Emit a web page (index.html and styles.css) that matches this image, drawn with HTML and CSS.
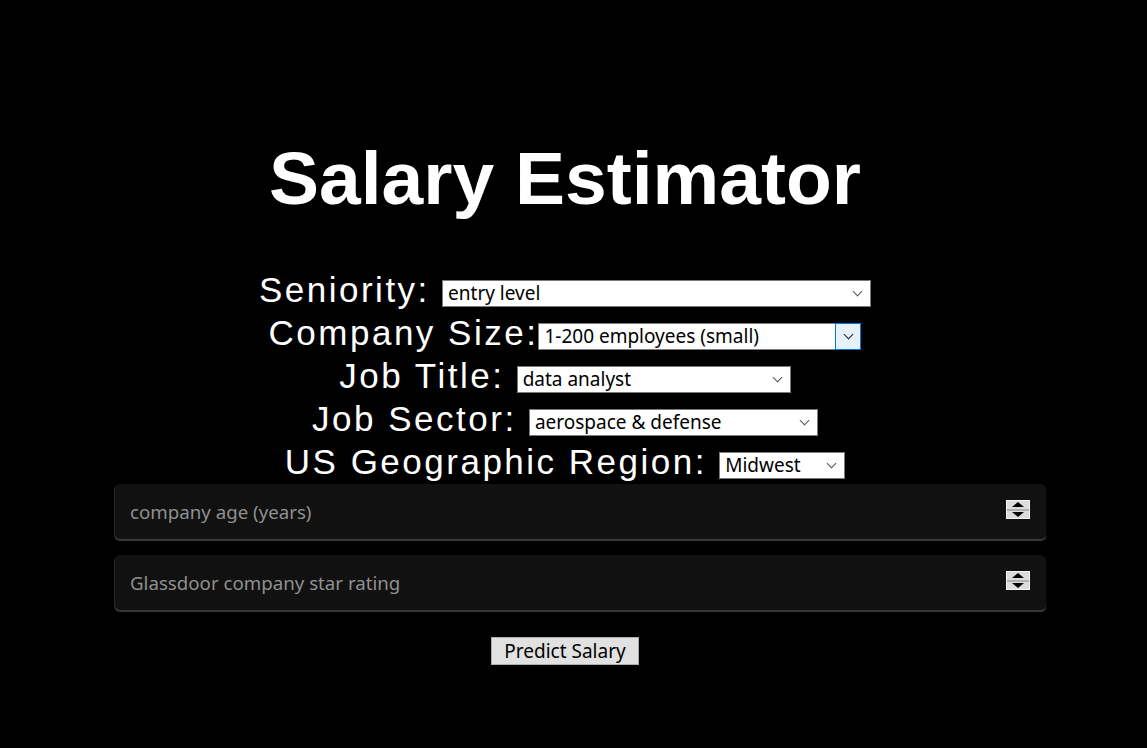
FILE: index.html
```html
<!DOCTYPE html>
<html>
<head>
<meta charset="utf-8">
<link rel="stylesheet" href="styles.css">
</head>
<body>
<div class="page">
  <h1 class="title">Salary Estimator</h1>
  <form class="form">
    <div class="row"><label class="lbl">Seniority: </label><span class="sel w429"><select class="select"><option>entry level</option></select><span class="chev"></span></span></div>
    <div class="row"><label class="lbl">Company Size:</label><span class="sel w323 focus"><select class="select"><option>1-200 employees (small)</option></select><span class="chevbox"><span class="chev"></span></span></span></div>
    <div class="row"><label class="lbl">Job Title: </label><span class="sel w274"><select class="select"><option>data analyst</option></select><span class="chev"></span></span></div>
    <div class="row"><label class="lbl">Job Sector: </label><span class="sel w289"><select class="select"><option>aerospace &amp; defense</option></select><span class="chev"></span></span></div>
    <div class="row"><label class="lbl">US Geographic Region: </label><span class="sel w126"><select class="select"><option>Midwest</option></select><span class="chev"></span></span></div>
    <div class="num">
      <input class="numin" type="text" placeholder="company age (years)">
      <span class="spin"><span class="up"></span><span class="down"></span></span>
    </div>
    <div class="num">
      <input class="numin" type="text" placeholder="Glassdoor company star rating">
      <span class="spin"><span class="up"></span><span class="down"></span></span>
    </div>
    <div class="btnrow"><button type="button" class="btn">Predict Salary</button></div>
  </form>
</div>
</body>
</html>
```

FILE: styles.css
```css
html, body {
  margin: 0;
  padding: 0;
  background: #000;
}
body {
  width: 1130px;
  height: 748px;
  overflow: hidden;
}
.page {
  padding-top: 128px;
}
.title {
  margin: 0;
  text-align: center;
  font-family: "Liberation Sans", Arial, sans-serif;
  font-weight: bold;
  font-size: 75px;
  line-height: 100px;
  color: #fff;
}
.form {
  margin-top: 40px;
}
.row {
  text-align: center;
  height: 43px;
  line-height: 43px;
  white-space: pre;
}
.lbl {
  font-family: "Liberation Sans", Arial, sans-serif;
  font-size: 35px;
  letter-spacing: 2.5px;
  color: #fff;
}
.sel {
  display: inline-block;
  position: relative;
  height: 27px;
  vertical-align: 2px;
  line-height: normal;
  letter-spacing: 0;
}
.w429 { width: 429px; }
.w323 { width: 323px; }
.w274 { width: 274px; }
.w289 { width: 289px; }
.w126 { width: 126px; }
.select {
  appearance: none;
  -webkit-appearance: none;
  box-sizing: border-box;
  width: 100%;
  height: 27px;
  margin: 0;
  padding: 0 0 0 5px;
  border: 1px solid #7a7a7a;
  border-radius: 0;
  background: #fff;
  color: #000;
  font-family: "Noto Sans", "Open Sans", sans-serif;
  font-size: 19px;
  line-height: 25px;
  display: block;
}
.chev {
  position: absolute;
  right: 10px;
  top: 8px;
  width: 6px;
  height: 6px;
  border-right: 1px solid #555;
  border-bottom: 1px solid #555;
  transform: rotate(45deg);
  pointer-events: none;
}
.chevbox {
  position: absolute;
  right: 0;
  top: 0;
  box-sizing: border-box;
  width: 26px;
  height: 27px;
  border: 1px solid #0078d7;
  background: #e5f1fb;
}
.chevbox .chev {
  right: 8px;
  top: 7px;
  border-color: #222;
}
.num {
  position: relative;
  box-sizing: border-box;
  width: 931px;
  height: 55px;
  margin: 1px 0 0 115px;
  border-radius: 5px;
  background: #111;
  box-shadow: 0 2px 1px #3a3a3a, -1px 1px 1px #2a2a2a;
}
.num + .num {
  margin-top: 16px;
}
.numin {
  box-sizing: border-box;
  width: 100%;
  height: 55px;
  border: 0;
  outline: none;
  background: transparent;
  padding: 0 0 0 15px;
  font-family: "Noto Sans", "Open Sans", sans-serif;
  font-size: 18.7px;
  color: #ddd;
}
.numin::placeholder {
  color: #909090;
}
.spin {
  position: absolute;
  right: 16px;
  top: 16px;
  width: 24px;
  height: 19px;
  box-sizing: border-box;
  border: 1px solid #f4f4f4;
  background: #dcdcdc;
  display: flex;
  flex-direction: column;
}
.up, .down {
  flex: 1;
  display: flex;
  justify-content: center;
  align-items: center;
}
.up { border-bottom: 2px solid #b0b0b0; }
.up::before {
  content: "";
  border-left: 6px solid transparent;
  border-right: 6px solid transparent;
  border-bottom: 5px solid #000;
}
.down::before {
  content: "";
  border-left: 6px solid transparent;
  border-right: 6px solid transparent;
  border-top: 5px solid #000;
}
.btnrow {
  text-align: center;
  margin-top: 27px;
}
.btn {
  box-sizing: border-box;
  width: 148px;
  height: 28px;
  margin: 0;
  padding: 0;
  border: 1px solid #adadad;
  border-radius: 0;
  background: #e1e1e1;
  color: #000;
  font-family: "Noto Sans", "Open Sans", sans-serif;
  font-size: 19px;
  line-height: 26px;
}
```
